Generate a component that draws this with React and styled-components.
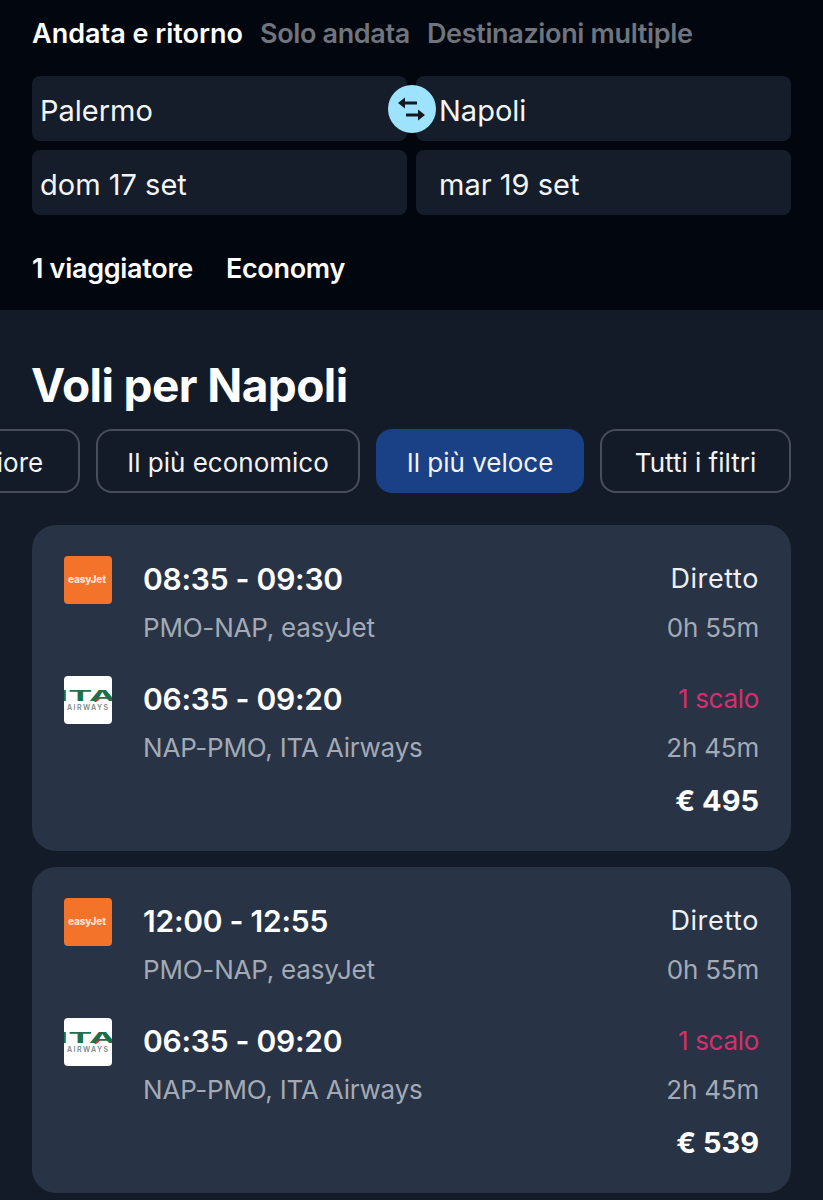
import React from 'react';
import styled, { createGlobalStyle } from 'styled-components';

const GlobalStyle = createGlobalStyle`
  html, body {
    margin: 0;
    background: #141b28;
    font-family: "Inter", "Liberation Sans", sans-serif;
    color: #fff;
  }
  * { box-sizing: border-box; }
`;

const Page = styled.div`
  width: 823px;
  height: 1200px;
  overflow: hidden;
`;

const Header = styled.header`
  height: 310px;
  background: #02060f;
  padding: 19px 32px 0;
`;

const Tabs = styled.div`
  display: flex;
  gap: 17px;
  height: 30px;
  align-items: center;
`;

const Tab = styled.span`
  font-size: 27px;
  font-weight: 600;
  letter-spacing: ${(p) => (p.$active ? '0' : '-0.35px')};
  line-height: 30px;
  color: ${(p) => (p.$active ? '#ffffff' : '#70747d')};
`;

const FieldGrid = styled.div`
  position: relative;
  display: grid;
  grid-template-columns: 375px 375px;
  grid-auto-rows: 65px;
  column-gap: 9px;
  row-gap: 9px;
  margin-top: 27px;
`;

const Field = styled.div`
  display: flex;
  align-items: center;
  background: #161d2a;
  border-radius: 8px;
  padding-left: ${(p) => (p.$right ? '23px' : '8px')};
  padding-top: 4px;
  font-size: 29px;
  letter-spacing: 0;
  color: #f4f5f6;
`;

const SwapButton = styled.div`
  position: absolute;
  left: 356px;
  top: 9px;
  width: 48px;
  height: 48px;
  border-radius: 50%;
  background: #9de3fd;
  display: flex;
  align-items: center;
  justify-content: center;
`;

const Options = styled.div`
  display: flex;
  gap: 33px;
  margin-top: 38px;
`;

const Option = styled.span`
  font-size: 27px;
  font-weight: 600;
  letter-spacing: -0.3px;
  line-height: 32px;
`;

const Results = styled.main`
  padding: 49px 0 0;
`;

const Title = styled.h1`
  margin: 0 0 0 31px;
  font-size: 46px;
  font-weight: 700;
  letter-spacing: -0.6px;
  line-height: 52px;
`;

const Chips = styled.div`
  display: flex;
  justify-content: flex-end;
  gap: 16px;
  margin-top: 18px;
  padding-right: 32px;
  overflow: hidden;
`;

const Chip = styled.div`
  flex: none;
  width: ${(p) => p.$width}px;
  height: 64px;
  display: flex;
  align-items: center;
  justify-content: center;
  padding-top: 2px;
  border-radius: 16px;
  border: ${(p) => (p.$active ? '2px solid #1a4185' : '2px solid #474d5a')};
  background: ${(p) => (p.$active ? '#1a4185' : 'transparent')};
  font-size: 26px;
  letter-spacing: 0;
  color: #f2f3f5;
`;

const CardList = styled.div`
  display: flex;
  flex-direction: column;
  gap: 16px;
  margin: 32px 32px 0;
`;

const Card = styled.article`
  height: 326px;
  background: #283345;
  border-radius: 24px;
  padding: 31px 32px 0;
`;

const Leg = styled.div`
  display: grid;
  grid-template-columns: 48px 1fr auto;
  column-gap: 31px;
  height: 120px;
`;

const LogoBox = styled.div`
  width: 48px;
  height: 48px;
  border-radius: 4px;
  overflow: hidden;
  background: ${(p) => p.$bg};
`;

const Column = styled.div`
  display: flex;
  flex-direction: column;
  gap: 13px;
  margin-top: 5px;
  text-align: ${(p) => (p.$end ? 'right' : 'left')};
`;

const Times = styled.div`
  font-size: 30px;
  font-weight: 600;
  line-height: 36px;
  letter-spacing: -0.25px;
`;

const Stops = styled.div`
  font-size: ${(p) => (p.$warn ? '26px' : '27px')};
  line-height: 36px;
  letter-spacing: ${(p) => (p.$warn ? '-0.3px' : '0.6px')};
  color: ${(p) => (p.$warn ? '#d62f6d' : '#eef0f2')};
`;

const Sub = styled.div`
  font-size: 26px;
  line-height: 36px;
  letter-spacing: -0.2px;
  color: #a3aab5;
`;

const Price = styled.div`
  text-align: right;
  font-size: 29px;
  font-weight: 700;
  line-height: 36px;
  margin-top: -13px;
`;

function SwapIcon() {
  return (
    <svg width="30" height="30" viewBox="0 0 30 30" fill="#14181f">
      <path d="M1 9 L8 3.5 V7.5 H20 V10.5 H8 V14.5 Z" />
      <path d="M28 21 L21 15.5 V19.5 H9 V22.5 H21 V26.5 Z" />
    </svg>
  );
}

function EasyJetLogo() {
  return (
    <LogoBox $bg="#f4732a">
      <svg width="48" height="48" viewBox="0 0 48 48">
        <text x="23" y="27" textAnchor="middle" fontSize="10" fontWeight="800" fontFamily="Inter, sans-serif" fill="#fbe3d4" textLength="38">
          easyJet
        </text>
      </svg>
    </LogoBox>
  );
}

function ItaLogo() {
  return (
    <LogoBox $bg="#ffffff">
      <svg width="48" height="48" viewBox="0 0 48 48">
        <text x="23" y="25" textAnchor="middle" fontSize="15" fontWeight="700" fontFamily="Inter, sans-serif" fill="#1f6f4a" textLength="58" lengthAdjust="spacingAndGlyphs">
          ITA
        </text>
        <path d="M30 26 Q33 22 37 21 Q35 25 32 26 Z" fill="#c8322f" />
        <text x="23.5" y="34" textAnchor="middle" fontSize="7" fontWeight="600" fontFamily="Inter, sans-serif" fill="#7e8a87" textLength="41">
          AIRWAYS
        </text>
      </svg>
    </LogoBox>
  );
}

const flights = [
  { out: '08:35 - 09:30', price: '€ 495' },
  { out: '12:00 - 12:55', price: '€ 539' },
];

function FlightCard({ flight }) {
  return (
    <Card>
      <Leg>
        <EasyJetLogo />
        <Column>
          <Times>{flight.out}</Times>
          <Sub>PMO-NAP, easyJet</Sub>
        </Column>
        <Column $end>
          <Stops>Diretto</Stops>
          <Sub>0h 55m</Sub>
        </Column>
      </Leg>
      <Leg>
        <ItaLogo />
        <Column>
          <Times>06:35 - 09:20</Times>
          <Sub>NAP-PMO, ITA Airways</Sub>
        </Column>
        <Column $end>
          <Stops $warn>1 scalo</Stops>
          <Sub>2h 45m</Sub>
        </Column>
      </Leg>
      <Price>{flight.price}</Price>
    </Card>
  );
}

export default function App() {
  return (
    <Page>
      <GlobalStyle />
      <Header>
        <Tabs>
          <Tab $active>Andata e ritorno</Tab>
          <Tab>Solo andata</Tab>
          <Tab>Destinazioni multiple</Tab>
        </Tabs>
        <FieldGrid>
          <Field>Palermo</Field>
          <Field $right>Napoli</Field>
          <Field>dom 17 set</Field>
          <Field $right>mar 19 set</Field>
          <SwapButton>
            <SwapIcon />
          </SwapButton>
        </FieldGrid>
        <Options>
          <Option>1 viaggiatore</Option>
          <Option>Economy</Option>
        </Options>
      </Header>
      <Results>
        <Title>Voli per Napoli</Title>
        <Chips>
          <Chip $width={192}>Il migliore</Chip>
          <Chip $width={264}>Il più economico</Chip>
          <Chip $active $width={208}>Il più veloce</Chip>
          <Chip $width={191}>Tutti i filtri</Chip>
        </Chips>
        <CardList>
          {flights.map((f) => (
            <FlightCard key={f.price} flight={f} />
          ))}
        </CardList>
      </Results>
    </Page>
  );
}
